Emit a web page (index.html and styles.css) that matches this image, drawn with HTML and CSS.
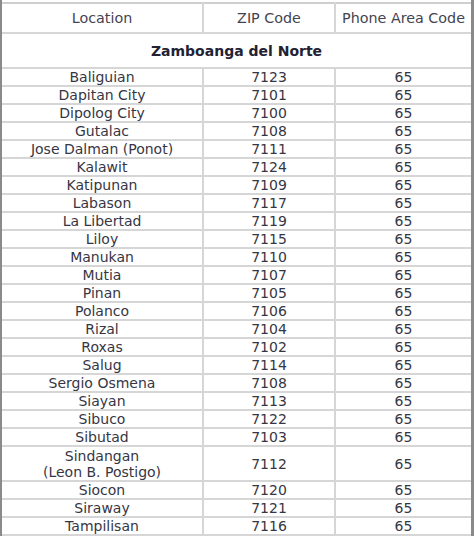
FILE: index.html
```html
<!DOCTYPE html>
<html>
<head>
<meta charset="utf-8">
<link rel="stylesheet" href="styles.css">
</head>
<body>
<div class="frame">
<table class="zip">
  <tr class="head"><th class="c1">Location</th><th class="c2">ZIP Code</th><th class="c3">Phone Area Code</th></tr>
  <tr class="section"><td colspan="3">Zamboanga del Norte</td></tr>
  <tr><td>Baliguian</td><td>7123</td><td>65</td></tr>
  <tr><td>Dapitan City</td><td>7101</td><td>65</td></tr>
  <tr><td>Dipolog City</td><td>7100</td><td>65</td></tr>
  <tr><td>Gutalac</td><td>7108</td><td>65</td></tr>
  <tr><td>Jose Dalman (Ponot)</td><td>7111</td><td>65</td></tr>
  <tr><td>Kalawit</td><td>7124</td><td>65</td></tr>
  <tr><td>Katipunan</td><td>7109</td><td>65</td></tr>
  <tr><td>Labason</td><td>7117</td><td>65</td></tr>
  <tr><td>La Libertad</td><td>7119</td><td>65</td></tr>
  <tr><td>Liloy</td><td>7115</td><td>65</td></tr>
  <tr><td>Manukan</td><td>7110</td><td>65</td></tr>
  <tr><td>Mutia</td><td>7107</td><td>65</td></tr>
  <tr><td>Pinan</td><td>7105</td><td>65</td></tr>
  <tr><td>Polanco</td><td>7106</td><td>65</td></tr>
  <tr><td>Rizal</td><td>7104</td><td>65</td></tr>
  <tr><td>Roxas</td><td>7102</td><td>65</td></tr>
  <tr><td>Salug</td><td>7114</td><td>65</td></tr>
  <tr><td>Sergio Osmena</td><td>7108</td><td>65</td></tr>
  <tr><td>Siayan</td><td>7113</td><td>65</td></tr>
  <tr><td>Sibuco</td><td>7122</td><td>65</td></tr>
  <tr><td>Sibutad</td><td>7103</td><td>65</td></tr>
  <tr class="tall"><td>Sindangan<br>(Leon B. Postigo)</td><td>7112</td><td>65</td></tr>
  <tr><td>Siocon</td><td>7120</td><td>65</td></tr>
  <tr><td>Siraway</td><td>7121</td><td>65</td></tr>
  <tr><td>Tampilisan</td><td>7116</td><td>65</td></tr>
</table>
</div>
</body>
</html>
```
FILE: styles.css
```css
html, body {
  margin: 0;
  padding: 0;
  background: #ffffff;
}
.frame {
  width: 469px;
  height: 536px;
  border-left: 2px solid #8a8a8a;
  border-right: 3px solid #8a8a8a;
  overflow: hidden;
}
.zip {
  width: 100%;
  margin-top: 2px;
  border-collapse: collapse;
  table-layout: fixed;
  font-family: "DejaVu Sans", Verdana, sans-serif;
  font-size: 14px;
  color: #363644;
}
.zip th, .zip td {
  border: 2px solid #d6d6d6;
  padding: 0;
  text-align: center;
  line-height: 16px;
  height: 16px;
  font-weight: normal;
}
.zip tr:first-child th { border-top-color: #cfcfcf; }
.zip th:first-child, .zip td:first-child { border-left: none; }
.zip th:last-child, .zip td:last-child { border-right: none; }
.c1 { width: 200px; }
.c2 { width: 130px; }
.head th {
  height: 28px;
  line-height: 28px;
  font-size: 14.3px;
  color: #444450;
}
.section td {
  height: 33px;
  font-weight: bold;
  color: #222233;
}
.tall td {
  height: 33px;
}
```
